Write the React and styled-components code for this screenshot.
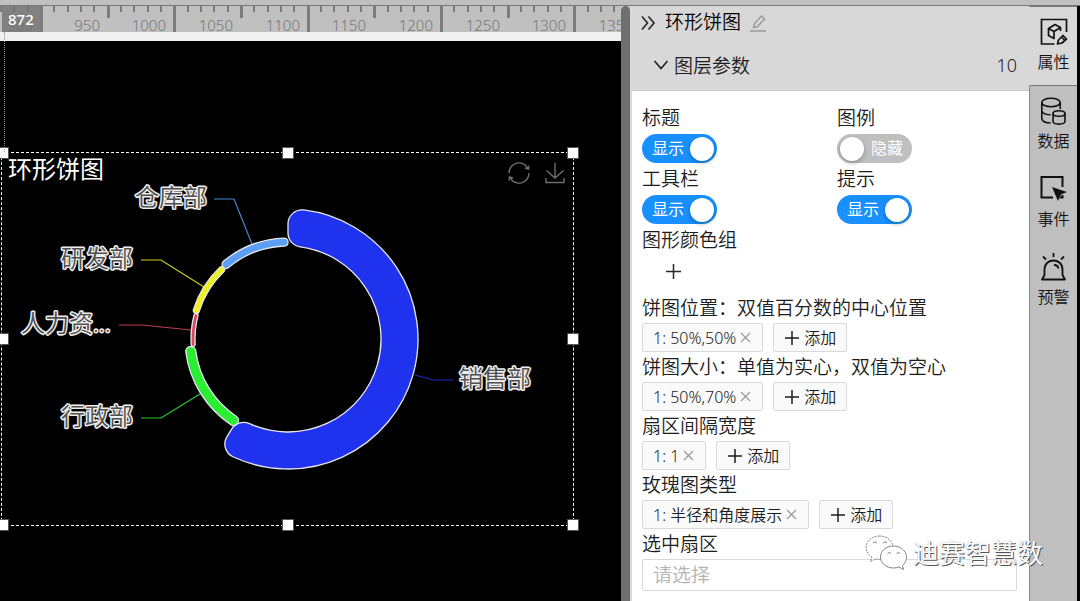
import React, { useLayoutEffect, useRef, useState } from 'react';
import styled, { createGlobalStyle, css } from 'styled-components';


const GlobalStyle = createGlobalStyle`
    * {
        box-sizing: border-box;
    }

    body {
        margin: 0;
        background: #000;
        color: #1c1c1c;
        font-family: "Noto Sans", "Noto Sans CJK SC", sans-serif;
        font-size: 16px;
        font-weight: 350;
    }

    button, select {
        font: inherit;
        color: inherit;
    }

    svg {
        display: block;
        flex-shrink: 0;
    }
`;

const Page = styled.div`
    position: relative;
    display: flex;
    flex-direction: column;
    min-height: 100vh;
    overflow: hidden;
`;

const TopBar = styled.div`
    height: 6px;
    background: #c0c0c0;
    border-bottom: 1px solid #777;
`;

const Workspace = styled.div`
    flex: 1;
    display: flex;
    border-right: 3px solid #000;
`;

/* ---------- canvas ---------- */

const Stage = styled.main`
    flex: 1;
    min-width: 0;
    display: flex;
    flex-direction: column;
    position: relative;
    overflow: hidden;
`;

const RulerBar = styled.div`
    height: 35px;
    background: #c0c0c0;
    border-bottom: 9px solid #f0f0f0;

    svg {
        overflow: visible;
    }

    text {
        font-size: 15px;
        font-weight: 300;
        fill: #777;
        text-anchor: end;
    }
`;

const CursorBadge = styled.div`
    position: absolute;
    left: 2px;
    top: 0;
    width: 38px;
    height: 26px;
    padding-left: 6px;
    background: rgba(112, 112, 112, 0.8);
    color: #fff;
    font-weight: 500;
    font-size: 15px;
    line-height: 26px;
`;

const GuideLine = styled.div`
    position: absolute;
    left: 4px;
    top: 26px;
    height: 120px;
    border-left: 1px dotted #999;
`;

const Canvas = styled.div`
    flex: 1;
    position: relative;
    background: #000;
`;

const Selection = styled.section`
    position: absolute;
    left: 1px;
    top: 111px;
    width: 573px;
    height: 374px;
    border: 1px dashed #fff;
`;

const Handle = styled.span`
    position: absolute;
    left: ${({ x }) => x};
    top: ${({ y }) => y};
    width: 10px;
    height: 10px;
    margin: -5px;
    background: #fff;
    box-shadow: 0 0 0 1px #555;
`;

const ChartHeader = styled.header`
    position: absolute;
    left: 0;
    right: 0;
    top: 0;
    display: flex;
    justify-content: space-between;
    padding: 0 6px;
`;

const ChartTitle = styled.h2`
    margin: 0;
    color: #fff;
    font-size: 24px;
    font-weight: 400;
    line-height: 32px;
`;

const ChartTools = styled.div`
    display: flex;
    gap: 12px;
    padding-top: 8px;
`;

const IconButton = styled.button`
    display: flex;
    align-items: center;
    justify-content: center;
    padding: 0;
    border: 0;
    background: none;
    color: ${({ tone }) => tone || '#262626'};
`;

const ChartSvg = styled.svg`
    width: 100%;
    height: 100%;
    overflow: visible;

    text {
        font-size: 24px;
        font-weight: 350;
        fill: #505050;
        stroke: #eee;
        stroke-width: 3px;
        stroke-linejoin: round;
        paint-order: stroke;
    }
`;

const ScrollBar = styled.div`
    width: 9px;
    background: #d8d8d8;

    &::before {
        content: "";
        display: block;
        height: 100%;
        border-radius: 5px 5px 0 0;
        background: #6f6f6f;
    }
`;

/* ---------- property panel ---------- */

const Panel = styled.aside`
    width: 399px;
    flex-shrink: 0;
    background: #fff;
    border-left: 2px solid #d8d8d8;
`;

const PanelHead = styled.header`
    background: #d9d8d8;
    font-size: 19px;
    border-bottom: 1px solid #ccc;
`;

const PanelTitle = styled.div`
    display: flex;
    align-items: center;
    gap: 9px;
    height: 34px;
    padding-left: 8px;

    h1 {
        margin: 0;
        font-size: 19px;
        font-weight: 350;
        line-height: 30px;
        padding-bottom: 2px;
        color: #000;
    }
`;

const GroupTitle = styled.div`
    display: flex;
    align-items: center;
    gap: 5px;
    height: 50px;
    padding: 0 12px 0 21px;

    span:last-child {
        margin-left: auto;
        font-size: 18px;
    }
`;

const PanelBody = styled.form`
    padding: 11px 12px 10px 10px;
`;

const SwitchGrid = styled.div`
    display: grid;
    grid-template-columns: 1fr 1fr;
    column-gap: 15px;
`;

const labelText = css`
    display: block;
    font-size: 19px;
    white-space: nowrap;
`;

const SwitchLabel = styled.label`
    ${labelText}
    line-height: 32px;
`;

const FieldLabel = styled.label`
    ${labelText}
    line-height: 30px;
`;

const Track = styled.span`
    position: relative;
    display: flex;
    flex-direction: ${({ $on }) => ($on ? 'row' : 'row-reverse')};
    align-items: center;
    justify-content: space-between;
    width: 75px;
    height: 29px;
    padding: ${({ $on }) => ($on ? '0 3px 0 10px' : '0 9px 0 3px')};
    border-radius: 15px;
    background: ${({ $on }) => ($on ? '#1890ff' : '#bfbfbf')};
    color: #fff;
    font-weight: 400;
    line-height: 26px;

    input {
        position: absolute;
        inset: 0;
        width: 100%;
        height: 100%;
        margin: 0;
        opacity: 0;
    }

    span {
        padding-bottom: 2px;
    }

    i {
        width: 24px;
        height: 24px;
        border-radius: 50%;
        background: #fff;
        box-shadow: 0 2px 4px rgba(0, 35, 11, 0.3);
    }
`;

const AddColor = styled(IconButton)`
    width: 62px;
    height: 30px;
    margin-bottom: 7px;
`;

const TagRow = styled.div`
    display: flex;
    gap: 10px;
    height: 29px;
    line-height: 26px;
`;

const Tag = styled.span`
    display: flex;
    align-items: center;
    gap: 4px;
    padding: 0 11px 0 10px;
    border: 1px solid #d9d9d9;
    border-radius: 2px;
    background: #fafafa;
    white-space: nowrap;
`;

const AddTag = styled.button`
    display: flex;
    align-items: center;
    gap: 5px;
    padding: 0 10px 0 11px;
    border: 1px solid #d9d9d9;
    border-radius: 2px;
    background: #fafafa;
    line-height: 26px;
`;

const Select = styled.select`
    display: block;
    width: 100%;
    height: 32px;
    padding: 0 10px;
    border: 1px solid #d9d9d9;
    border-radius: 2px;
    background: #fff;
    color: #b4b4b4;
    font-size: 19px;
    appearance: none;
`;

/* ---------- tabs on the right ---------- */

const SideTabs = styled.nav`
    width: 48px;
    flex-shrink: 0;
    display: flex;
    flex-direction: column;
    background: #c0bfc0;
`;

const SideTab = styled.button`
    display: flex;
    flex-direction: column;
    align-items: center;
    width: 100%;
    height: 78px;
    padding: 11px 0 0;
    border: 0;
    border-left: 1px solid #888;
    background: none;
    line-height: 24px;
    gap: 4px;
    color: #111;

    ${({ $active }) => $active && css`
        height: 80px;
        border-left-color: #d9d8d8;
        border-top: 1px solid #777;
        border-bottom: 1px solid #777;
        background: #d9d8d8;
    `}
`;

const TabFill = styled.div`
    flex: 1;
    border-left: 1px solid #888;
`;

const Watermark = styled.div`
    position: absolute;
    right: 37px;
    bottom: 29px;
    display: flex;
    align-items: center;
    gap: 6px;
    height: 38px;
    color: #fff;
    font-size: 26px;
    font-weight: 400;
    line-height: 34px;
    text-shadow: 1px 1px 0 #555, 0 0 1px #999;
    pointer-events: none;
`;


const Stroke = ({ size = 28, width = 2, children, ...rest }) => (
    <svg width={size} height={size} viewBox={`0 0 ${size} ${size}`} fill="none" stroke="currentColor" strokeWidth={width} aria-hidden="true" {...rest}>
        {children}
    </svg>
);

const CubeIcon = () => (
    <Stroke width="1.7">
        <path d="M14.500 26H1.500V1.500H26.500V14" />
        <path d="M8.500 10.500 15 6.500 20.500 9.500 14 13.500zM8.500 10.500V17.500L14 20.500V13.500M20.500 9.500V13" strokeLinejoin="round" />
        <path d="M17.500 26 18.500 22 23 17.500 26.500 21 22 25zM21.500 19 25 22.500" strokeLinejoin="round" />
    </Stroke>
);

const DatabaseIcon = () => (
    <Stroke width="1.6">
        <ellipse cx="11" cy="5.500" rx="9.200" ry="4.200" />
        <path d="M1.800 5.500V22C2.500 24.500 5.500 26 10.500 26M20.200 5.500V12M1.800 14C3 16.500 6 17.800 10.500 17.800" />
        <ellipse cx="19" cy="16.500" rx="6" ry="2.800" />
        <path d="M13 16.500V24.500C13.500 28 24.500 28 25 24.500V16.500" />
    </Stroke>
);

const EventIcon = () => (
    <Stroke width="2">
        <path d="M13 22.500H1.500V2H22.500V12M22.500 20V22.500H20" />
        <path d="M12 12 27 17 21 19.500 18 26z" fill="currentColor" stroke="none" />
    </Stroke>
);

const AlarmIcon = () => (
    <Stroke width="1.8">
        <path d="M4.500 22V16.500C4.500 4.500 22.500 4.500 22.500 16.500V22L25 26.500H2zM14 12Q18 12 18.500 15.500" strokeLinejoin="round" />
        <path d="M13.500 0V4M3 3.500 6 6.500M24 3.500 21 6.500" />
    </Stroke>
);

const PlusIcon = ({ size = 14 }) => (
    <Stroke size={size} width="1.5">
        <path d={`M${size / 2} 0V${size}M0 ${size / 2}H${size}`} />
    </Stroke>
);

const CloseIcon = () => (
    <Stroke size={11} width="1.2">
        <path d="M1 1 10 10M10 1 1 10" />
    </Stroke>
);


// angles are in degrees, clockwise from twelve o'clock
const point = (radius, angle) => {
    const a = (angle * Math.PI) / 180;
    return `${(radius * Math.sin(a)).toFixed(2)} ${(-radius * Math.cos(a)).toFixed(2)}`;
};

const sectorPath = (r, R, from, to, c) => {
    const out = (Math.asin(c / (R - c)) * 180) / Math.PI;
    const inn = (Math.asin(c / (r + c)) * 180) / Math.PI;
    const outEdge = Math.sqrt((R - c) ** 2 - c * c);
    const inEdge = Math.sqrt((r + c) ** 2 - c * c);
    const largeOut = to - from - 2 * out > 180 ? 1 : 0;
    const largeIn = to - from - 2 * inn > 180 ? 1 : 0;
    return [
        `M${point(inEdge, from)}`,
        `L${point(outEdge, from)}`,
        `A${c} ${c} 0 0 1 ${point(R, from + out)}`,
        `A${R} ${R} 0 ${largeOut} 1 ${point(R, to - out)}`,
        `A${c} ${c} 0 0 1 ${point(outEdge, to)}`,
        `L${point(inEdge, to)}`,
        `A${c} ${c} 0 0 1 ${point(r, to - inn)}`,
        `A${r} ${r} 0 ${largeIn} 0 ${point(r, from + inn)}`,
        `A${c} ${c} 0 0 1 ${point(inEdge, from)}Z`,
    ].join('');
};

const INNER = 93;

const sectors = [
    { name: '销售部', color: '#1f33ee', outer: 130, from: 0, to: 212, corner: 14, line: '127,36 145,41 165,41', x: 171, y: 48 },
    { name: '行政部', color: '#2bee33', outer: 103, from: 211, to: 265.5, corner: 4.5, line: '-88,55 -127,79 -147,79', x: -227, y: 86 },
    { name: '人力资...', color: '#d9485f', outer: 97, from: 265.5, to: 285.5, corner: 1.8, line: '-97,-9 -146,-14 -169,-14', x: -267, y: -7 },
    { name: '研发部', color: '#eef01f', outer: 99, from: 285.5, to: 318, corner: 2.8, line: '-84,-52 -127,-79 -147,-79', x: -227, y: -72 },
    { name: '仓库部', color: '#5b9ff5', outer: 101, from: 318, to: 360, corner: 3.8, line: '-36,-95 -54,-140 -74,-140', x: -153, y: -133 },
];

const handles = [
    ['1px', '0'], ['50%', '0'], ['100%', '0'],
    ['1px', '50%'], ['100%', '50%'],
    ['1px', '100%'], ['50%', '100%'], ['100%', '100%'],
];

const switches = [
    { id: 'title', label: '标题', on: true },
    { id: 'legend', label: '图例', on: false },
    { id: 'toolbar', label: '工具栏', on: true },
    { id: 'tip', label: '提示', on: true },
];

const tagFields = [
    { id: 'center', label: '饼图位置：双值百分数的中心位置', value: '1: 50%,50%' },
    { id: 'radius', label: '饼图大小：单值为实心，双值为空心', value: '1: 50%,70%' },
    { id: 'gap', label: '扇区间隔宽度', value: '1: 1' },
    { id: 'rose', label: '玫瑰图类型', value: '1: 半径和角度展示' },
];

const tabs = [
    { label: '属性', Icon: CubeIcon },
    { label: '数据', Icon: DatabaseIcon },
    { label: '事件', Icon: EventIcon },
    { label: '预警', Icon: AlarmIcon },
];


const Ruler = () => {
    const bar = useRef(null);
    const [width, setWidth] = useState(0);

    useLayoutEffect(() => {
        const measure = () => setWidth(bar.current.clientWidth);
        measure();
        window.addEventListener('resize', measure);
        return () => window.removeEventListener('resize', measure);
    }, []);

    const marks = [];
    for (let v = 870; 41 + ((v - 900) * 4) / 3 < width + 30; v += 10) {
        marks.push({ v, x: Math.round(41 + ((v - 900) * 4) / 3) });
    }

    return (
        <RulerBar ref={bar}>
            <svg width="100%" height="26">
                {marks.map(({ v, x }) => {
                    const h = v % 100 === 0 ? 26 : v % 50 === 0 ? 12 : 6;
                    return <rect key={v} x={x - 1} y="0" width={h > 6 ? 3 : 2} height={h} fill="#7c7c7c" />;
                })}
                {marks.filter(({ v }) => v % 50 === 0).map(({ v, x }) => (
                    <text key={v} x={x - 8} y="25">{v}</text>
                ))}
            </svg>
        </RulerBar>
    );
};

const RosePie = () => (
    <ChartSvg viewBox="-286 -186 571 372" role="img" aria-label="环形饼图">
        {sectors.map((s) => (
            <g key={s.name}>
                <polyline points={s.line} fill="none" stroke={s.color} strokeWidth="1.200" opacity="0.85" />
                <path d={sectorPath(INNER, s.outer, s.from, s.to, s.corner)} fill={s.color} stroke="#e6e6f0" strokeWidth="1.300" />
                <text x={s.x} y={s.y}>{s.name}</text>
            </g>
        ))}
    </ChartSvg>
);

const Toggle = ({ id, label, on }) => {
    const [checked, setChecked] = useState(on);
    return (
        <div>
            <SwitchLabel htmlFor={id}>{label}</SwitchLabel>
            <Track $on={checked}>
                <input id={id} type="checkbox" role="switch" checked={checked} onChange={(e) => setChecked(e.target.checked)} />
                <span>{checked ? '显示' : '隐藏'}</span>
                <i />
            </Track>
        </div>
    );
};

const TagField = ({ label, value }) => (
    <div>
        <FieldLabel as="div">{label}</FieldLabel>
        <TagRow>
            <Tag>
                {value}
                <IconButton type="button" tone="#999" aria-label="删除"><CloseIcon /></IconButton>
            </Tag>
            <AddTag type="button"><PlusIcon />添加</AddTag>
        </TagRow>
    </div>
);


const App = () => {
    const [tab, setTab] = useState('属性');

    return (
        <Page>
            <GlobalStyle />
            <TopBar />
            <Workspace>
                <Stage>
                    <Ruler />
                    <CursorBadge>872</CursorBadge>
                    <Canvas>
                        <Selection>
                            <RosePie />
                            <ChartHeader>
                                <ChartTitle>环形饼图</ChartTitle>
                                <ChartTools>
                                    <IconButton tone="#6e6e6e" aria-label="刷新">
                                        <Stroke size={24} width="1.4">
                                            <path d="M2 12A10 10 0 0 1 21 7.500M22 12A10 10 0 0 1 3 16.500M22 4.500 21.500 8 18 7M2 19.500 2.500 16 6 17" />
                                        </Stroke>
                                    </IconButton>
                                    <IconButton tone="#6e6e6e" aria-label="下载">
                                        <Stroke size={24} width="1.4">
                                            <path d="M12 1.500V17M3.500 9.500 12 17 20.500 9.500M3 17V21.500H21V17" />
                                        </Stroke>
                                    </IconButton>
                                </ChartTools>
                            </ChartHeader>
                            {handles.map(([x, y]) => <Handle key={x + y} x={x} y={y} />)}
                        </Selection>
                    </Canvas>
                    <GuideLine />
                </Stage>
                <ScrollBar />

                <Panel>
                    <PanelHead>
                        <PanelTitle>
                            <IconButton aria-label="收起">
                                <Stroke size={16} width="1.6"><path d="M2 1.500 7.500 8 2 14.500M8.500 1.500 14 8 8.500 14.500" /></Stroke>
                            </IconButton>
                            <h1>环形饼图</h1>
                            <IconButton tone="#999" aria-label="重命名">
                                <Stroke size={17} width="1.4"><path d="M3.500 12.500 4.500 8.500 11.500 1 14.500 4 7.500 11.500zM0 16H16" /></Stroke>
                            </IconButton>
                        </PanelTitle>
                        <GroupTitle>
                            <Stroke size={16} width="1.5"><path d="M1.500 4 8 11.500 14.500 4" /></Stroke>
                            <span>图层参数</span>
                            <span>10</span>
                        </GroupTitle>
                    </PanelHead>
                    <PanelBody>
                        <SwitchGrid>
                            {switches.map((s) => <Toggle key={s.id} {...s} />)}
                        </SwitchGrid>
                        <SwitchLabel as="div">图形颜色组</SwitchLabel>
                        <AddColor type="button" aria-label="添加颜色"><PlusIcon size={15} /></AddColor>
                        {tagFields.map((f) => <TagField key={f.id} {...f} />)}
                        <FieldLabel htmlFor="selected">选中扇区</FieldLabel>
                        <Select id="selected" defaultValue="">
                            <option value="">请选择</option>
                            {sectors.map((s) => <option key={s.name}>{s.name}</option>)}
                        </Select>
                    </PanelBody>
                </Panel>

                <SideTabs>
                    {tabs.map(({ label, Icon }) => (
                        <SideTab key={label} $active={tab === label} onClick={() => setTab(label)}>
                            <Icon />
                            {label}
                        </SideTab>
                    ))}
                    <TabFill />
                </SideTabs>
            </Workspace>

            <Watermark>
                <svg width="42" height="36" viewBox="0 0 42 36" fill="#fff" stroke="#777" strokeWidth="0.900">
                    <path d="M14.500 1C7 1 1 6 1 12.500C1 16.500 3.500 20 7 22L5.500 26.500 11 23.800Q15 25 19 23.800C27 21.500 29 17 28 11C26.500 5 21 1 14.500 1Z" strokeDasharray="2 1" />
                    <path d="M28.500 11C21 11 15.500 16 15.500 22C15.500 28.500 21.500 33 28.500 33Q31.500 33 34 32L38.500 34.500 37.500 30.500C40 28.500 41.500 25.500 41.500 22C41.500 16 35.500 11 28.500 11Z" />
                    <path d="M8 8Q10 5.500 12 8M18 8Q20 5.500 22 8M22.500 18.500Q24 16.500 26 18.500M31.500 18.500Q33 16.500 35 18.500" fill="none" />
                </svg>
                迪赛智慧数
            </Watermark>
        </Page>
    );
};

export default App;
